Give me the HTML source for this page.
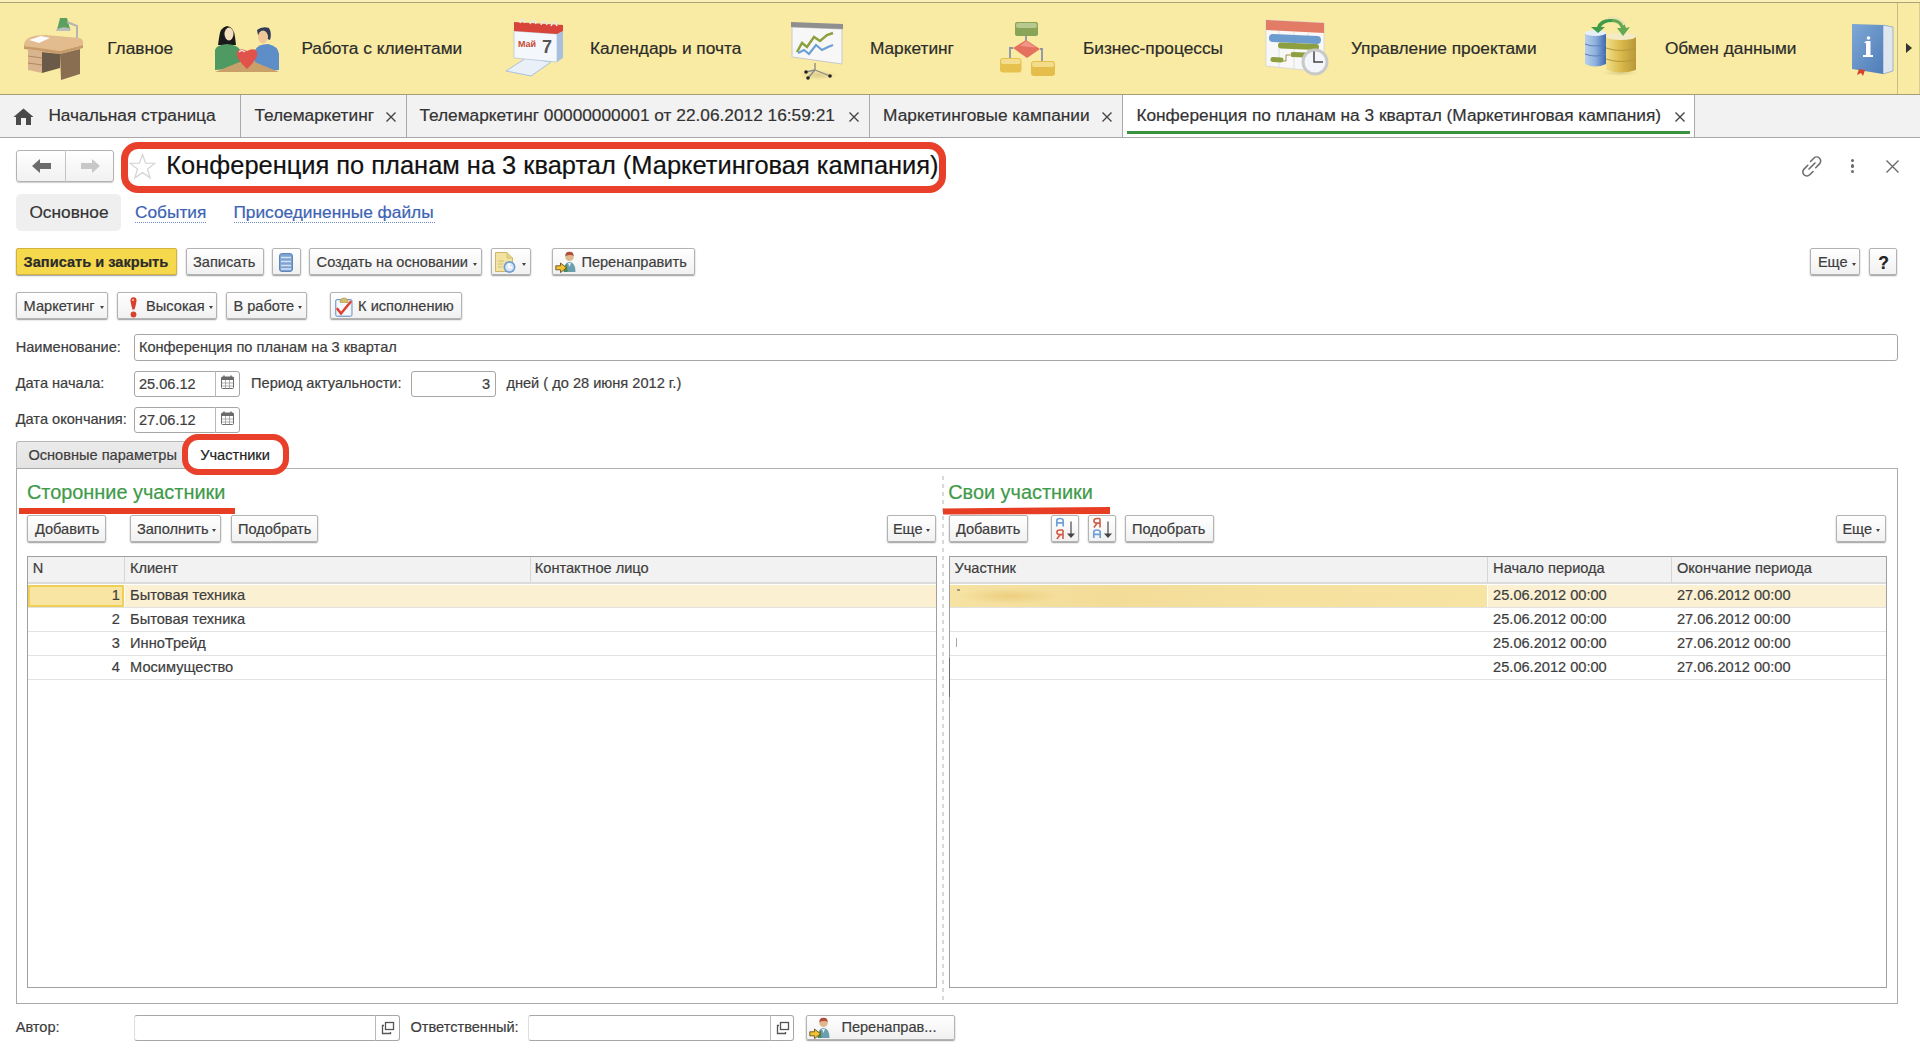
<!DOCTYPE html>
<html><head><meta charset="utf-8"><style>
html,body{margin:0;padding:0;width:1920px;height:1056px;overflow:hidden;background:#fff;}
body{position:relative;font-family:"Liberation Sans",sans-serif;}
.t{position:absolute;white-space:nowrap;line-height:1;-webkit-text-stroke:0.2px currentColor;}
.r{position:absolute;box-sizing:border-box;}
.btn{position:absolute;box-sizing:border-box;border:1px solid #b3b3b3;border-radius:2px;background:linear-gradient(#ffffff,#f1f1f1);box-shadow:0 1px 1.5px rgba(0,0,0,0.4);}
.inp{position:absolute;box-sizing:border-box;border:1px solid #a6a6a6;border-radius:3px;background:#fff;}
.btn.yel{background:#f5d84c;border-color:#d2b33c;}
.btn.nav{border-radius:3px;box-shadow:0 1px 1px rgba(0,0,0,0.2);}
</style></head><body>
<div class="r" style="left:0px;top:0px;width:1920px;height:95px;background:#F9EBA3;"></div>
<div class="r" style="left:0px;top:0px;width:1920px;height:2px;background:#fbf0b5;"></div>
<div class="r" style="left:0px;top:2px;width:1920px;height:1px;background:#aba275;"></div>
<div class="r" style="left:0px;top:94px;width:1920px;height:1px;background:#a69e73;"></div>
<div class="r" style="left:1897px;top:3px;width:1px;height:91px;background:#c9bd85;"></div>
<div class="r" style="left:1919px;top:3px;width:1px;height:91px;background:#d9cd95;"></div>
<div class="r" style="left:1906px;top:43px;width:0;height:0;border-top:5.5px solid transparent;border-bottom:5.5px solid transparent;border-left:6px solid #333"></div>
<div class="t" style="left:107.2px;top:40.36px;font-size:17.3px;color:#2b2b2b;font-weight:400;transform-origin:0 14.64px;">Главное</div>
<div class="t" style="left:301.4px;top:40.36px;font-size:17.3px;color:#2b2b2b;font-weight:400;transform-origin:0 14.64px;">Работа с клиентами</div>
<div class="t" style="left:589.9px;top:40.36px;font-size:17.3px;color:#2b2b2b;font-weight:400;transform-origin:0 14.64px;">Календарь и почта</div>
<div class="t" style="left:869.9px;top:40.36px;font-size:17.3px;color:#2b2b2b;font-weight:400;transform-origin:0 14.64px;">Маркетинг</div>
<div class="t" style="left:1082.9px;top:40.36px;font-size:17.3px;color:#2b2b2b;font-weight:400;transform-origin:0 14.64px;">Бизнес-процессы</div>
<div class="t" style="left:1350.9px;top:40.36px;font-size:17.3px;color:#2b2b2b;font-weight:400;transform-origin:0 14.64px;">Управление проектами</div>
<div class="t" style="left:1664.9px;top:40.36px;font-size:17.3px;color:#2b2b2b;font-weight:400;transform-origin:0 14.64px;">Обмен данными</div>
<svg class="r" style="left:0;top:0" width="1920" height="95" viewBox="0 0 1920 95">
<defs>
<linearGradient id="gDesk" x1="0" y1="0" x2="0" y2="1"><stop offset="0" stop-color="#e8c9a0"/><stop offset="1" stop-color="#cfa77a"/></linearGradient>
<linearGradient id="gBlueCyl" x1="0" y1="0" x2="1" y2="0"><stop offset="0" stop-color="#b9d0ec"/><stop offset="0.5" stop-color="#8cb0dc"/><stop offset="1" stop-color="#3f67b0"/></linearGradient>
<linearGradient id="gYelCyl" x1="0" y1="0" x2="1" y2="0"><stop offset="0" stop-color="#f1e08a"/><stop offset="0.5" stop-color="#d9b94a"/><stop offset="1" stop-color="#b8973a"/></linearGradient>
<linearGradient id="gBook" x1="0" y1="0" x2="1" y2="1"><stop offset="0" stop-color="#7fa8d6"/><stop offset="1" stop-color="#4f7db8"/></linearGradient>
<radialGradient id="gShadow"><stop offset="0" stop-color="#c8b880" stop-opacity="0.6"/><stop offset="1" stop-color="#c8b880" stop-opacity="0"/></radialGradient>
</defs>
<!-- desk -->
<g>
<path d="M60 18 L67 18 L70 29 L57 30 Z" fill="#5aa05f"/>
<path d="M56 30 Q63 25 71 29 L70 31 L56 31Z" fill="#bdbdbd"/>
<path d="M67 22 L77 26 L77 38" stroke="#b4b4b4" stroke-width="2" fill="none"/>
<path d="M24 44 Q26 35 45 35 L80 38 Q84 40 83 45 L60 51 Q40 50 24 46Z" fill="#e2bb8e"/>
<path d="M24 46 L60 51 L83 45 L83 48 L60 54 L24 49Z" fill="#c89a6a"/>
<path d="M29 40 L41 36 L50 38 L39 43Z" fill="#fbfbfb"/>
<path d="M28 49 L42 51 L42 73 L28 70Z" fill="#d9b48e"/>
<path d="M28 56 L42 58 M28 63 L42 65" stroke="#b08862" stroke-width="1"/>
<path d="M42 52 L60 54 L60 68 L42 73Z" fill="#6b5a48"/>
<path d="M60 54 L80 49 L80 74 L61 80Z" fill="#8a6e52"/>
</g>
<!-- people -->
<g>
<path d="M219 38 Q220 27 227 26 Q234 27 235 37 L236 45 L218 45Z" fill="#1a1a1a"/>
<ellipse cx="229" cy="34" rx="4.5" ry="6.5" fill="#f3dfc0"/>
<path d="M215 70 L215 50 Q216 45 227 44 Q238 45 240 50 L243 68Z" fill="#4f9a62"/>
<path d="M257 30 Q262 26 269 28 Q272 33 270 40 L258 35Z" fill="#333c55"/>
<ellipse cx="263" cy="37" rx="5" ry="6.5" fill="#f0c898"/>
<path d="M254 72 L255 50 Q258 44 268 44 Q278 46 279 54 L279 70Z" fill="#5d8ec8"/>
<path d="M215 72 L247 59 L279 72Z" fill="#c9a06a"/>
<path d="M247 69 Q235 58 237 52 Q240 47 247 51 Q254 47 257 52 Q259 58 247 69Z" fill="#e0524a"/>
<path d="M239 52 Q242 49 245 52" stroke="#fff" stroke-width="1.5" fill="none" opacity="0.8"/>
</g>
<!-- calendar -->
<g>
<path d="M506 71 L526 58 L551 62 L531 76Z" fill="#e9f0f8" stroke="#a9c0dc" stroke-width="1"/>
<path d="M514 31 L557 34 L557 62 L514 58Z" fill="#f4f8fc" stroke="#b9c8da" stroke-width="0.8"/>
<path d="M557 34 L563 31 L563 58 L557 62Z" fill="#a8c0de"/>
<path d="M514 22 L563 25 L563 31 L557 34 L514 31Z" fill="#d8433a"/>
<path d="M520 23 Q522 16 525 23 M530 24 Q533 17 536 24 M541 25 Q544 18 547 25 M551 26 Q554 19 557 26" stroke="#e8e8e8" stroke-width="1.5" fill="none"/>
<text x="518" y="47" font-family="Liberation Sans" font-size="9" font-weight="700" fill="#c94a35">Май</text>
<text x="542" y="53" font-family="Liberation Sans" font-size="18" font-weight="700" fill="#555">7</text>
</g>
<!-- board -->
<g>
<ellipse cx="818" cy="75" rx="20" ry="5" fill="url(#gShadow)"/>
<path d="M792 27 L842 29 L842 64 L792 57Z" fill="#f7f7f7" stroke="#c9c9c9" stroke-width="1"/>
<path d="M791 22 L843 24 L843 29 L791 27Z" fill="#8f8f8f"/>
<path d="M797 52 L802 43 L807 47 L814 37 L820 41 L827 35 L833 33" stroke="#8da040" stroke-width="2.5" fill="none"/>
<path d="M798 53 L804 50 L809 54 L816 45 L822 50 L828 47 L833 45" stroke="#6b9fd4" stroke-width="2.2" fill="none"/>
<path d="M815 63 L815 70 L806 72 M815 70 L808 78 M815 70 L830 76" stroke="#888" stroke-width="1.3" fill="none"/>
<circle cx="806" cy="72" r="1.8" fill="#222"/><circle cx="808" cy="78" r="1.8" fill="#222"/><circle cx="830" cy="76" r="1.8" fill="#222"/>
</g>
<!-- flowchart -->
<g>
<path d="M1026 36 V41 M1013 48 H1010 V58 M1040 49 H1042 V61" stroke="#8a94a8" stroke-width="1.8" fill="none"/>
<rect x="1015" y="22" width="23" height="14" rx="2" fill="#88a456"/>
<rect x="1016" y="23" width="21" height="5" rx="2" fill="#b7c98e"/>
<path d="M1026 40 L1040 49 L1027 58 L1013 48Z" fill="#e6705e"/><path d="M1026 41 L1036 47.5 L1020 46Z" fill="#f1a898" opacity="0.7"/>
<rect x="1000" y="58" width="21.5" height="14.5" rx="3" fill="#e7c14e"/><rect x="1001" y="59" width="19.5" height="5" rx="2" fill="#f4de8e"/>
<rect x="1031" y="61" width="24" height="15" rx="3" fill="#e5bd4a"/><rect x="1032" y="62" width="22" height="5" rx="2" fill="#f3dc8c"/>
</g>
<!-- gantt -->
<g>
<path d="M1266 20 L1324 23 L1324 72 L1266 66Z" fill="#f8f8f8" stroke="#d4d4d4" stroke-width="0.8"/>
<path d="M1266 20 L1324 23 L1324 33 L1266 30Z" fill="#e27c66"/>
<path d="M1279 31 V67 M1294 32 V69 M1308 33 V70" stroke="#e0e0e0" stroke-width="1"/>
<path d="M1273 38 L1317 40" stroke="#6d9ccf" stroke-width="8" stroke-linecap="round"/>
<path d="M1281 45.5 L1316 47" stroke="#8da040" stroke-width="6" stroke-linecap="round"/>
<path d="M1293 54.5 L1305 55" stroke="#8da040" stroke-width="5" stroke-linecap="round"/>
<path d="M1273 59.5 L1281 60" stroke="#8da040" stroke-width="5" stroke-linecap="round"/>
<path d="M1283 61 H1286 V55 H1290" stroke="#a09048" stroke-width="1" fill="none"/>
<circle cx="1315" cy="62" r="13.5" fill="#c9c9c9"/>
<circle cx="1315" cy="62" r="10.5" fill="#f3f6fa"/>
<path d="M1314 51.5 V62 H1323" stroke="#444" stroke-width="1.5" fill="none"/>
</g>
<!-- databases -->
<g>
<ellipse cx="1620" cy="73" rx="18" ry="3" fill="url(#gShadow)"/>
<path d="M1585 34 Q1595 29 1606 34 V64 Q1595 69 1585 64Z" fill="url(#gBlueCyl)"/>
<ellipse cx="1595.5" cy="33" rx="10.5" ry="3" fill="#e6eef8"/>
<path d="M1585 44 Q1595 48 1606 44 M1585 54 Q1595 58 1606 54" stroke="#5d80b8" stroke-width="1" fill="none"/>
<path d="M1606 37 Q1621 32 1636 37 V70 Q1621 75 1606 70Z" fill="url(#gYelCyl)"/>
<ellipse cx="1621" cy="36.5" rx="15" ry="3.5" fill="#f2ebc6"/>
<path d="M1606 48 Q1621 53 1636 48 M1606 59 Q1621 64 1636 59" stroke="#b59838" stroke-width="1" fill="none"/>
<path d="M1612 19 Q1600 18 1597 27 L1591 27 L1598 33 L1605 27 L1601 27 Q1604 22 1612 22Z" fill="#3f9a4a"/>
<path d="M1612 19 Q1624 18 1626 28 L1630 27 L1623 36 L1617 28 L1621 28 Q1619 22 1612 22Z" fill="#64a854"/>
<path d="M1608 18 Q1620 16 1624 25" stroke="#e8e0b0" stroke-width="2" fill="none"/>
</g>
<!-- book -->
<g>
<path d="M1883 25 L1893 27 L1893 71 L1883 74Z" fill="#dfe6ee" stroke="#8aa6c8" stroke-width="0.8"/>
<path d="M1852 24 L1883 25 L1883 74 L1852 69Z" fill="url(#gBook)"/>
<path d="M1866 41 H1870.5 V55 H1873 V57 H1863 V55 H1866 V43 H1864Z" fill="#fff"/>
<circle cx="1868.5" cy="38" r="1.8" fill="#fff"/>
<path d="M1859 69 L1865 70 L1863 76 L1861 73 L1857 75Z" fill="#d8402f"/>
</g>
</svg>
<div class="r" style="left:0px;top:95px;width:1920px;height:42px;background:#f2f2f2;"></div>
<div class="r" style="left:0px;top:137px;width:1920px;height:1px;background:#a8a8a8;"></div>
<div class="r" style="left:1123px;top:95px;width:571px;height:42px;background:#fff;"></div>
<div class="r" style="left:240px;top:95px;width:1px;height:42px;background:#a9a9a9;"></div>
<div class="r" style="left:406px;top:95px;width:1px;height:42px;background:#a9a9a9;"></div>
<div class="r" style="left:869px;top:95px;width:1px;height:42px;background:#a9a9a9;"></div>
<div class="r" style="left:1122px;top:95px;width:1px;height:42px;background:#a9a9a9;"></div>
<div class="r" style="left:1694px;top:95px;width:1px;height:42px;background:#a9a9a9;"></div>
<div class="r" style="left:1127px;top:131px;width:563px;height:3px;background:#3a943f;"></div>
<div class="t" style="left:48.4px;top:107.36px;font-size:17.3px;color:#333;font-weight:400;transform-origin:0 14.64px;">Начальная страница</div>
<div class="t" style="left:254.4px;top:107.36px;font-size:17.3px;color:#333;font-weight:400;transform-origin:0 14.64px;">Телемаркетинг</div>
<svg class="r" style="left:385.6px;top:112px" width="10" height="10" viewBox="0 0 10 10"><path d="M0.5 0.5L9.5 9.5M9.5 0.5L0.5 9.5" stroke="#444" stroke-width="1.4"/></svg>
<div class="t" style="left:419.4px;top:107.36px;font-size:17.3px;color:#333;font-weight:400;transform-origin:0 14.64px;">Телемаркетинг 00000000001 от 22.06.2012 16:59:21</div>
<svg class="r" style="left:849px;top:112px" width="10" height="10" viewBox="0 0 10 10"><path d="M0.5 0.5L9.5 9.5M9.5 0.5L0.5 9.5" stroke="#444" stroke-width="1.4"/></svg>
<div class="t" style="left:883.1px;top:107.36px;font-size:17.3px;color:#333;font-weight:400;transform-origin:0 14.64px;">Маркетинговые кампании</div>
<svg class="r" style="left:1102px;top:112px" width="10" height="10" viewBox="0 0 10 10"><path d="M0.5 0.5L9.5 9.5M9.5 0.5L0.5 9.5" stroke="#444" stroke-width="1.4"/></svg>
<div class="t" style="left:1136.4px;top:107.36px;font-size:17.3px;color:#333;font-weight:400;transform-origin:0 14.64px;">Конференция по планам на 3 квартал (Маркетинговая кампания)</div>
<svg class="r" style="left:1674.5px;top:112px" width="10" height="10" viewBox="0 0 10 10"><path d="M0.5 0.5L9.5 9.5M9.5 0.5L0.5 9.5" stroke="#444" stroke-width="1.4"/></svg>
<svg class="r" style="left:13px;top:108px" width="21" height="18" viewBox="0 0 21 18"><path d="M10.5 0.5L20.5 9H18V17H13V10H8V17H3V9H0.5Z" fill="#4a4a4a"/></svg>
<div class="btn nav" style="left:16px;top:150px;width:98px;height:32px;"></div>
<div class="r" style="left:65px;top:150px;width:1px;height:32px;background:#c4c4c4;"></div>
<svg class="r" style="left:32px;top:159px" width="20" height="14" viewBox="0 0 20 14"><path d="M0 7L8 0V4H19V10H8V14Z" fill="#6b6b6b"/></svg>
<svg class="r" style="left:80px;top:159px" width="20" height="14" viewBox="0 0 20 14"><path d="M20 7L12 0V4H1V10H12V14Z" fill="#c8c8c8"/></svg>
<div class="r" style="left:121px;top:142px;width:825px;height:51px;border:7px solid #e8402a;border-radius:17px;"></div>
<svg class="r" style="left:129px;top:153px" width="27" height="27" viewBox="0 0 27 27"><path d="M13.5 1.5L16.6 10.2L25.8 10.4L18.5 16L21.1 24.9L13.5 19.6L5.9 24.9L8.5 16L1.2 10.4L10.4 10.2Z" fill="none" stroke="#d6d6d6" stroke-width="1.3"/></svg>
<div class="t" style="left:166.3px;top:153.46px;font-size:25.45px;color:#111;font-weight:400;transform-origin:0 21.54px;">Конференция по планам на 3 квартал (Маркетинговая кампания)</div>
<svg class="r" style="left:1800px;top:155px" width="24" height="23" viewBox="0 0 24 23"><g fill="none" stroke="#6e6e6e" stroke-width="1.6" stroke-linecap="round"><path d="M10.5 6.5L13.8 3.2a4 4 0 0 1 5.7 5.7L15.7 12.7"/><path d="M13 16.5L9.7 19.8a4 4 0 0 1-5.7-5.7L7.8 10.3"/><path d="M9 14L15 8"/></g></svg>
<div class="r" style="left:1850.8px;top:158.9px;width:3.6px;height:3.6px;border-radius:50%;background:#6a6a6a"></div>
<div class="r" style="left:1850.8px;top:164.3px;width:3.6px;height:3.6px;border-radius:50%;background:#6a6a6a"></div>
<div class="r" style="left:1850.8px;top:169.6px;width:3.6px;height:3.6px;border-radius:50%;background:#6a6a6a"></div>
<svg class="r" style="left:1886px;top:160px" width="13" height="13" viewBox="0 0 13 13"><path d="M0.5 0.5L12.5 12.5M12.5 0.5L0.5 12.5" stroke="#6a6a6a" stroke-width="1.4"/></svg>
<div class="r" style="left:16px;top:194px;width:105px;height:37px;background:#efefef;border-radius:5px;"></div>
<div class="t" style="left:29.4px;top:204.16px;font-size:17.3px;color:#333;font-weight:400;transform-origin:0 14.64px;">Основное</div>
<div class="t" style="left:135.0px;top:204.16px;font-size:17.3px;color:#3c63b4;font-weight:400;transform-origin:0 14.64px;">События</div>
<div class="r" style="left:135px;top:222px;width:72px;height:2px;background-image:linear-gradient(90deg,#6d8fd0 50%,transparent 50%);background-size:2px 1px;background-repeat:repeat-x;height:1px;"></div>
<div class="t" style="left:233.4px;top:204.16px;font-size:17.3px;color:#3c63b4;font-weight:400;transform-origin:0 14.64px;">Присоединенные файлы</div>
<div class="r" style="left:234px;top:222px;width:201px;height:2px;background-image:linear-gradient(90deg,#6d8fd0 50%,transparent 50%);background-size:2px 1px;background-repeat:repeat-x;height:1px;"></div>
<div class="btn yel" style="left:16px;top:248px;width:161px;height:27px;"></div>
<div class="t" style="left:23.6px;top:254.64px;font-size:14.6px;color:#2b2b2b;font-weight:700;transform-origin:0 12.36px;">Записать и закрыть</div>
<div class="btn" style="left:186px;top:248px;width:78px;height:27px;"></div>
<div class="t" style="left:193.0px;top:254.64px;font-size:14.6px;color:#3d3d3d;font-weight:400;transform-origin:0 12.36px;">Записать</div>
<div class="btn" style="left:272px;top:248px;width:29px;height:27px;"></div>
<svg class="r" style="left:279px;top:252.5px" width="14" height="19" viewBox="0 0 14 19"><rect x="0.5" y="0.5" width="13" height="18" rx="2.5" fill="#7ea3d3" stroke="#5f86bb" stroke-width="1"/><path d="M2 4.5H12M2 8.5H12M2 12.5H12M2 16H12" stroke="#d6e3f3" stroke-width="1.6"/></svg>
<div class="btn" style="left:309px;top:248px;width:173px;height:27px;"></div>
<div class="t" style="left:316.6px;top:254.64px;font-size:14.6px;color:#3d3d3d;font-weight:400;transform-origin:0 12.36px;">Создать на основании</div>
<div class="r" style="left:473.4px;top:262.5px;width:0;height:0;border-left:2.5px solid transparent;border-right:2.5px solid transparent;border-top:3px solid #444"></div>
<div class="btn" style="left:491px;top:248px;width:40px;height:27px;"></div>
<svg class="r" style="left:494px;top:252px" width="24" height="22" viewBox="0 0 24 22"><path d="M1.5 0.5H13L18.5 6V19.5H1.5Z" fill="#f2e3a0" stroke="#cdb66a" stroke-width="1"/><path d="M13 0.5V6H18.5" fill="#e8d488" stroke="#cdb66a" stroke-width="0.8"/><path d="M4 9H10M4 12H9M4 15H8" stroke="#c9b878" stroke-width="0.8"/><circle cx="15.5" cy="15" r="6" fill="#6f9fd6"/><circle cx="15.5" cy="15" r="4.3" fill="#d9e7f6"/><path d="M15 11.5V15.5H18" stroke="#fff" stroke-width="1.6" fill="none"/></svg>
<div class="r" style="left:522.2px;top:262.5px;width:0;height:0;border-left:2.5px solid transparent;border-right:2.5px solid transparent;border-top:3px solid #444"></div>
<div class="btn" style="left:552px;top:248px;width:143px;height:27px;"></div>
<svg class="r" style="left:555px;top:251px" width="22" height="23" viewBox="0 0 22 23"><circle cx="14.5" cy="5.8" r="4.3" fill="#e0b890"/><path d="M10.3 5Q10.5 0.5 14.5 0.8Q18.5 0.5 18.7 5Q16 2.8 10.3 5Z" fill="#b0503a"/><path d="M8.5 21Q8.5 11.5 14.5 11Q20.5 11.5 20.5 21Z" fill="#6a9fb0"/><path d="M9 21Q9 15 12 13L12.5 21Z" fill="#4f8a55"/><path d="M13 12L14.5 16L16 12Z" fill="#e6eef4"/><path d="M0.8 14.8H5.5V12L11.5 16.8L5.5 21.6V18.8H0.8Z" fill="#f2c230" stroke="#6a5020" stroke-width="0.9"/></svg>
<div class="t" style="left:581.4px;top:254.64px;font-size:14.6px;color:#3d3d3d;font-weight:400;transform-origin:0 12.36px;">Перенаправить</div>
<div class="btn" style="left:1810px;top:248px;width:50px;height:27px;"></div>
<div class="t" style="left:1817.9px;top:254.64px;font-size:14.6px;color:#3d3d3d;font-weight:400;transform-origin:0 12.36px;">Еще</div>
<div class="r" style="left:1851.5px;top:262.5px;width:0;height:0;border-left:2.5px solid transparent;border-right:2.5px solid transparent;border-top:3px solid #444"></div>
<div class="btn" style="left:1869px;top:248px;width:28px;height:27px;"></div>
<div class="t" style="left:1878.3px;top:255.19px;font-size:17.5px;color:#222;font-weight:700;transform-origin:0 14.81px;">?</div>
<div class="btn" style="left:16px;top:292px;width:92px;height:27px;"></div>
<div class="t" style="left:23.6px;top:298.64px;font-size:14.6px;color:#3d3d3d;font-weight:400;transform-origin:0 12.36px;">Маркетинг</div>
<div class="r" style="left:99.8px;top:306px;width:0;height:0;border-left:2.5px solid transparent;border-right:2.5px solid transparent;border-top:3px solid #444"></div>
<div class="btn" style="left:117px;top:292px;width:100px;height:27px;"></div>
<svg class="r" style="left:129.5px;top:296.5px" width="7" height="21" viewBox="0 0 7 21"><path d="M0.5 3.2Q0.5 0.2 3.5 0.2Q6.5 0.2 6.5 3.2Q6.5 6 4.5 12.5H2.5Q0.5 6 0.5 3.2Z" fill="#d8412e"/><circle cx="3.5" cy="17.5" r="2.9" fill="#d8412e"/><circle cx="3" cy="3" r="1" fill="#f0c8a0"/></svg>
<div class="t" style="left:146.1px;top:298.64px;font-size:14.6px;color:#3d3d3d;font-weight:400;transform-origin:0 12.36px;">Высокая</div>
<div class="r" style="left:208.8px;top:306px;width:0;height:0;border-left:2.5px solid transparent;border-right:2.5px solid transparent;border-top:3px solid #444"></div>
<div class="btn" style="left:226px;top:292px;width:81px;height:27px;"></div>
<div class="t" style="left:233.4px;top:298.64px;font-size:14.6px;color:#3d3d3d;font-weight:400;transform-origin:0 12.36px;">В работе</div>
<div class="r" style="left:297.8px;top:306px;width:0;height:0;border-left:2.5px solid transparent;border-right:2.5px solid transparent;border-top:3px solid #444"></div>
<div class="btn" style="left:330px;top:292px;width:132px;height:27px;"></div>
<svg class="r" style="left:334.5px;top:296.5px" width="18" height="20" viewBox="0 0 18 20"><rect x="0.7" y="2.5" width="16.3" height="16.8" rx="1.5" fill="#dfe9f5" stroke="#6f93c2" stroke-width="1"/><rect x="2" y="4" width="13.5" height="14" fill="#f6f9fc"/><path d="M5 5.5Q5 1 9 1Q13 1 13 5.5Z" fill="#d2bf6a" stroke="#a89040" stroke-width="0.6"/><path d="M2.5 12L6 16.5L15.5 5" stroke="#e04232" stroke-width="2.6" fill="none" stroke-linecap="round"/></svg>
<div class="t" style="left:358.1px;top:298.64px;font-size:14.6px;color:#3d3d3d;font-weight:400;transform-origin:0 12.36px;">К исполнению</div>
<div class="t" style="left:15.7px;top:339.64px;font-size:14.6px;color:#3d3d3d;font-weight:400;transform-origin:0 12.36px;">Наименование:</div>
<div class="inp" style="left:134px;top:334px;width:1764px;height:27px;"></div>
<div class="t" style="left:138.9px;top:340.14px;font-size:14.6px;color:#3d3d3d;font-weight:400;transform-origin:0 12.36px;">Конференция по планам на 3 квартал</div>
<div class="t" style="left:15.7px;top:376.14px;font-size:14.6px;color:#3d3d3d;font-weight:400;transform-origin:0 12.36px;">Дата начала:</div>
<div class="inp" style="left:134px;top:371px;width:106px;height:26px;"></div>
<div class="r" style="left:215px;top:371px;width:1px;height:26px;background:#b8b8b8;"></div>
<svg class="r" style="left:221px;top:375px" width="13" height="14" viewBox="0 0 13 14"><rect x="0.5" y="2" width="12" height="11.5" rx="1" fill="#fff" stroke="#6b6b6b"/><rect x="0.5" y="2" width="12" height="3" fill="#6b6b6b"/><path d="M3 0.5V3M10 0.5V3" stroke="#6b6b6b" stroke-width="1.5"/><path d="M1 8H12M1 11H12M4.5 5V13.5M8.5 5V13.5" stroke="#9a9a9a" stroke-width="0.8"/></svg>
<div class="t" style="left:138.9px;top:376.64px;font-size:14.6px;color:#3d3d3d;font-weight:400;transform-origin:0 12.36px;">25.06.12</div>
<div class="t" style="left:251.1px;top:376.14px;font-size:14.6px;color:#3d3d3d;font-weight:400;transform-origin:0 12.36px;">Период актуальности:</div>
<div class="inp" style="left:411px;top:371px;width:85px;height:26px;"></div>
<div class="t" style="left:482.1px;top:376.64px;font-size:14.6px;color:#3d3d3d;font-weight:400;transform-origin:0 12.36px;">3</div>
<div class="t" style="left:506.4px;top:376.14px;font-size:14.6px;color:#3d3d3d;font-weight:400;transform-origin:0 12.36px;">дней ( до 28 июня 2012 г.)</div>
<div class="t" style="left:15.7px;top:412.14px;font-size:14.6px;color:#3d3d3d;font-weight:400;transform-origin:0 12.36px;">Дата окончания:</div>
<div class="inp" style="left:134px;top:407px;width:106px;height:26px;"></div>
<div class="r" style="left:215px;top:407px;width:1px;height:26px;background:#b8b8b8;"></div>
<svg class="r" style="left:221px;top:411px" width="13" height="14" viewBox="0 0 13 14"><rect x="0.5" y="2" width="12" height="11.5" rx="1" fill="#fff" stroke="#6b6b6b"/><rect x="0.5" y="2" width="12" height="3" fill="#6b6b6b"/><path d="M3 0.5V3M10 0.5V3" stroke="#6b6b6b" stroke-width="1.5"/><path d="M1 8H12M1 11H12M4.5 5V13.5M8.5 5V13.5" stroke="#9a9a9a" stroke-width="0.8"/></svg>
<div class="t" style="left:138.9px;top:412.64px;font-size:14.6px;color:#3d3d3d;font-weight:400;transform-origin:0 12.36px;">27.06.12</div>
<div class="r" style="left:16px;top:441px;width:170px;height:28px;background:linear-gradient(#ebebeb,#e3e3e3);border:1px solid #b8b8b8;border-bottom:none;border-radius:3px 0 0 0;"></div>
<div class="r" style="left:16px;top:468px;width:1882px;height:536px;border:1px solid #a9a9a9;border-top:1px solid #b3b3b3;"></div>
<div class="r" style="left:186px;top:443px;width:98px;height:26px;background:#fff;"></div>
<div class="r" style="left:17px;top:468px;width:169px;height:1px;background:#a9a9a9;"></div>
<div class="t" style="left:28.4px;top:448.14px;font-size:14.6px;color:#3d3d3d;font-weight:400;transform-origin:0 12.36px;">Основные параметры</div>
<div class="t" style="left:200.2px;top:448.14px;font-size:14.6px;color:#222;font-weight:400;transform-origin:0 12.36px;">Участники</div>
<div class="r" style="left:182px;top:434px;width:107px;height:41px;border:6px solid #e8402a;border-radius:16px;"></div>
<div class="t" style="left:26.9px;top:482.95px;font-size:19.9px;color:#3f9a49;font-weight:400;transform-origin:0 16.85px;">Сторонние участники</div>
<div class="r" style="left:19px;top:508px;width:216px;height:6px;background:#e63d23;"></div>
<div class="btn" style="left:27px;top:515px;width:79px;height:27px;"></div>
<div class="t" style="left:34.9px;top:521.64px;font-size:14.6px;color:#3d3d3d;font-weight:400;transform-origin:0 12.36px;">Добавить</div>
<div class="btn" style="left:130px;top:515px;width:91px;height:27px;"></div>
<div class="t" style="left:136.9px;top:521.64px;font-size:14.6px;color:#3d3d3d;font-weight:400;transform-origin:0 12.36px;">Заполнить</div>
<div class="r" style="left:211.5px;top:528.5px;width:0;height:0;border-left:2.5px solid transparent;border-right:2.5px solid transparent;border-top:3px solid #444"></div>
<div class="btn" style="left:231px;top:515px;width:87px;height:27px;"></div>
<div class="t" style="left:237.9px;top:521.64px;font-size:14.6px;color:#3d3d3d;font-weight:400;transform-origin:0 12.36px;">Подобрать</div>
<div class="btn" style="left:887px;top:515px;width:49px;height:27px;"></div>
<div class="t" style="left:892.9px;top:521.64px;font-size:14.6px;color:#3d3d3d;font-weight:400;transform-origin:0 12.36px;">Еще</div>
<div class="r" style="left:926px;top:528.5px;width:0;height:0;border-left:2.5px solid transparent;border-right:2.5px solid transparent;border-top:3px solid #444"></div>
<div class="r" style="left:942px;top:476px;width:2px;height:524px;background-image:linear-gradient(#d8d8d8 50%,transparent 50%);background-size:2px 8px;"></div>
<div class="t" style="left:948.2px;top:482.95px;font-size:19.9px;color:#3f9a49;font-weight:400;transform-origin:0 16.85px;">Свои участники</div>
<svg class="r" style="left:943px;top:506px" width="168" height="9"><path d="M0 2.5L167 1V8L0 8.5Z" fill="#e63d23"/></svg>
<div class="btn" style="left:949px;top:515px;width:79px;height:27px;"></div>
<div class="t" style="left:955.9px;top:521.64px;font-size:14.6px;color:#3d3d3d;font-weight:400;transform-origin:0 12.36px;">Добавить</div>
<div class="btn" style="left:1051px;top:515px;width:28px;height:27px;"></div>
<svg class="r" style="left:1051px;top:515px" width="28" height="27" viewBox="0 0 28 27"><g transform="translate(4.8,2.5)"><path d="M1 9V3.2Q1 1 4.2 1Q7.4 1 7.4 3.2V9M1 5.3H7.4" stroke="#6f9fd6" stroke-width="1.7" fill="none"/></g><g transform="translate(4.8,14)"><path d="M7.2 1V10M7.2 1H3.9Q1.1 1 1.1 3.3Q1.1 5.6 3.9 5.6H7.2M4.5 5.6L1.1 10" stroke="#d05a45" stroke-width="1.6" fill="none"/></g><path d="M20 6.5V20" stroke="#555" stroke-width="1.3"/><path d="M16 18.5H24L20 23Z" fill="#444"/></svg>
<div class="btn" style="left:1088px;top:515px;width:28px;height:27px;"></div>
<svg class="r" style="left:1088px;top:515px" width="28" height="27" viewBox="0 0 28 27"><g transform="translate(4.8,2.5)"><path d="M7.2 1V10M7.2 1H3.9Q1.1 1 1.1 3.3Q1.1 5.6 3.9 5.6H7.2M4.5 5.6L1.1 10" stroke="#d05a45" stroke-width="1.6" fill="none"/></g><g transform="translate(4.8,14)"><path d="M1 9V3.2Q1 1 4.2 1Q7.4 1 7.4 3.2V9M1 5.3H7.4" stroke="#6f9fd6" stroke-width="1.7" fill="none"/></g><path d="M20 6.5V20" stroke="#555" stroke-width="1.3"/><path d="M16 18.5H24L20 23Z" fill="#444"/></svg>
<div class="btn" style="left:1125px;top:515px;width:89px;height:27px;"></div>
<div class="t" style="left:1131.9px;top:521.64px;font-size:14.6px;color:#3d3d3d;font-weight:400;transform-origin:0 12.36px;">Подобрать</div>
<div class="btn" style="left:1836px;top:515px;width:50px;height:27px;"></div>
<div class="t" style="left:1842.4px;top:521.64px;font-size:14.6px;color:#3d3d3d;font-weight:400;transform-origin:0 12.36px;">Еще</div>
<div class="r" style="left:1875.5px;top:528.5px;width:0;height:0;border-left:2.5px solid transparent;border-right:2.5px solid transparent;border-top:3px solid #444"></div>
<div class="r" style="left:27px;top:556px;width:910px;height:432px;border:1px solid #a0a0a0;background:#fff;"></div>
<div class="r" style="left:28px;top:557px;width:908px;height:25px;background:#f2f2f2;"></div>
<div class="r" style="left:28px;top:582px;width:908px;height:2px;background:#dadcdc;"></div>
<div class="r" style="left:124px;top:557px;width:1px;height:25px;background:#d6d6d6;"></div>
<div class="r" style="left:530px;top:557px;width:1px;height:25px;background:#d6d6d6;"></div>
<div class="r" style="left:28px;top:607px;width:908px;height:1px;background:#e2e2e2;"></div>
<div class="r" style="left:28px;top:631px;width:908px;height:1px;background:#e2e2e2;"></div>
<div class="r" style="left:28px;top:655px;width:908px;height:1px;background:#e2e2e2;"></div>
<div class="r" style="left:28px;top:679px;width:908px;height:1px;background:#e2e2e2;"></div>
<div class="r" style="left:125px;top:585px;width:811px;height:22px;background:#fbf1d2;"></div>
<div class="r" style="left:28px;top:585px;width:96px;height:22px;background:#f8e5a4;border:2px solid #efcf55;"></div>
<div class="t" style="left:32.7px;top:561.24px;font-size:14.6px;color:#3d3d3d;font-weight:400;transform-origin:0 12.36px;">N</div>
<div class="t" style="left:129.9px;top:561.24px;font-size:14.6px;color:#3d3d3d;font-weight:400;transform-origin:0 12.36px;">Клиент</div>
<div class="t" style="left:534.8px;top:561.24px;font-size:14.6px;color:#3d3d3d;font-weight:400;transform-origin:0 12.36px;">Контактное лицо</div>
<div class="t" style="left:110.9px;top:587.94px;font-size:14.6px;color:#3d3d3d;font-weight:400;transform-origin:0 12.36px;width:9px;text-align:right;">1</div>
<div class="t" style="left:130.1px;top:587.94px;font-size:14.6px;color:#3d3d3d;font-weight:400;transform-origin:0 12.36px;">Бытовая техника</div>
<div class="t" style="left:110.9px;top:611.94px;font-size:14.6px;color:#3d3d3d;font-weight:400;transform-origin:0 12.36px;width:9px;text-align:right;">2</div>
<div class="t" style="left:130.1px;top:611.94px;font-size:14.6px;color:#3d3d3d;font-weight:400;transform-origin:0 12.36px;">Бытовая техника</div>
<div class="t" style="left:110.9px;top:635.94px;font-size:14.6px;color:#3d3d3d;font-weight:400;transform-origin:0 12.36px;width:9px;text-align:right;">3</div>
<div class="t" style="left:130.1px;top:635.94px;font-size:14.6px;color:#3d3d3d;font-weight:400;transform-origin:0 12.36px;">ИнноТрейд</div>
<div class="t" style="left:110.9px;top:659.94px;font-size:14.6px;color:#3d3d3d;font-weight:400;transform-origin:0 12.36px;width:9px;text-align:right;">4</div>
<div class="t" style="left:130.1px;top:659.94px;font-size:14.6px;color:#3d3d3d;font-weight:400;transform-origin:0 12.36px;">Мосимущество</div>
<div class="r" style="left:949px;top:556px;width:938px;height:432px;border:1px solid #a0a0a0;background:#fff;"></div>
<div class="r" style="left:950px;top:557px;width:936px;height:25px;background:#f2f2f2;"></div>
<div class="r" style="left:950px;top:582px;width:936px;height:2px;background:#dadcdc;"></div>
<div class="r" style="left:1487px;top:557px;width:1px;height:25px;background:#d6d6d6;"></div>
<div class="r" style="left:1671px;top:557px;width:1px;height:25px;background:#d6d6d6;"></div>
<div class="r" style="left:950px;top:607px;width:936px;height:1px;background:#e2e2e2;"></div>
<div class="r" style="left:950px;top:631px;width:936px;height:1px;background:#e2e2e2;"></div>
<div class="r" style="left:950px;top:655px;width:936px;height:1px;background:#e2e2e2;"></div>
<div class="r" style="left:950px;top:679px;width:936px;height:1px;background:#e2e2e2;"></div>
<div class="r" style="left:950px;top:585px;width:537px;height:22px;background:linear-gradient(90deg,#f6e2a2,#f3dc98 30%,#f6e19f 60%,#f7e3a2);"></div>
<div class="r" style="left:1488px;top:585px;width:398px;height:22px;background:#fbf1d2;"></div>
<div class="r" style="left:960px;top:588px;width:100px;height:16px;background:radial-gradient(ellipse at 50% 50%,rgba(226,186,90,0.45),rgba(226,186,90,0) 70%);"></div>
<div class="r" style="left:957px;top:589px;width:3px;height:2px;background:rgba(60,60,60,0.45);"></div>
<div class="r" style="left:955.5px;top:638px;width:1.0px;height:9px;background:rgba(60,60,60,0.45);"></div>
<div class="r" style="left:949px;top:658px;width:1px;height:39px;background:#6a6a6a;"></div>
<div class="t" style="left:954.4px;top:561.24px;font-size:14.6px;color:#3d3d3d;font-weight:400;transform-origin:0 12.36px;">Участник</div>
<div class="t" style="left:1493.1px;top:561.24px;font-size:14.6px;color:#3d3d3d;font-weight:400;transform-origin:0 12.36px;">Начало периода</div>
<div class="t" style="left:1676.9px;top:561.24px;font-size:14.6px;color:#3d3d3d;font-weight:400;transform-origin:0 12.36px;">Окончание периода</div>
<div class="t" style="left:1493.1px;top:587.94px;font-size:14.6px;color:#3d3d3d;font-weight:400;transform-origin:0 12.36px;">25.06.2012 00:00</div>
<div class="t" style="left:1676.9px;top:587.94px;font-size:14.6px;color:#3d3d3d;font-weight:400;transform-origin:0 12.36px;">27.06.2012 00:00</div>
<div class="t" style="left:1493.1px;top:611.94px;font-size:14.6px;color:#3d3d3d;font-weight:400;transform-origin:0 12.36px;">25.06.2012 00:00</div>
<div class="t" style="left:1676.9px;top:611.94px;font-size:14.6px;color:#3d3d3d;font-weight:400;transform-origin:0 12.36px;">27.06.2012 00:00</div>
<div class="t" style="left:1493.1px;top:635.94px;font-size:14.6px;color:#3d3d3d;font-weight:400;transform-origin:0 12.36px;">25.06.2012 00:00</div>
<div class="t" style="left:1676.9px;top:635.94px;font-size:14.6px;color:#3d3d3d;font-weight:400;transform-origin:0 12.36px;">27.06.2012 00:00</div>
<div class="t" style="left:1493.1px;top:659.94px;font-size:14.6px;color:#3d3d3d;font-weight:400;transform-origin:0 12.36px;">25.06.2012 00:00</div>
<div class="t" style="left:1676.9px;top:659.94px;font-size:14.6px;color:#3d3d3d;font-weight:400;transform-origin:0 12.36px;">27.06.2012 00:00</div>
<div class="t" style="left:15.7px;top:1020.14px;font-size:14.6px;color:#3d3d3d;font-weight:400;transform-origin:0 12.36px;">Автор:</div>
<div class="inp" style="left:134px;top:1015px;width:266px;height:26px;border-left-color:#dedede;"></div>
<div class="r" style="left:375px;top:1015px;width:1px;height:26px;background:#b8b8b8;"></div>
<svg class="r" style="left:381px;top:1021px" width="14" height="14" viewBox="0 0 14 14"><rect x="4.5" y="1.5" width="8" height="7" fill="none" stroke="#555" stroke-width="1.3"/><path d="M3 4.5H1.5V12.5H9.5V11" fill="none" stroke="#555" stroke-width="1.3"/></svg>
<div class="t" style="left:410.4px;top:1020.14px;font-size:14.6px;color:#3d3d3d;font-weight:400;transform-origin:0 12.36px;">Ответственный:</div>
<div class="inp" style="left:528px;top:1015px;width:266px;height:26px;border-left-color:#dedede;"></div>
<div class="r" style="left:770px;top:1015px;width:1px;height:26px;background:#b8b8b8;"></div>
<svg class="r" style="left:776px;top:1021px" width="14" height="14" viewBox="0 0 14 14"><rect x="4.5" y="1.5" width="8" height="7" fill="none" stroke="#555" stroke-width="1.3"/><path d="M3 4.5H1.5V12.5H9.5V11" fill="none" stroke="#555" stroke-width="1.3"/></svg>
<div class="btn" style="left:806px;top:1015px;width:149px;height:25px;"></div>
<svg class="r" style="left:809px;top:1017px" width="22" height="23" viewBox="0 0 22 23"><circle cx="14.5" cy="5.8" r="4.3" fill="#e0b890"/><path d="M10.3 5Q10.5 0.5 14.5 0.8Q18.5 0.5 18.7 5Q16 2.8 10.3 5Z" fill="#b0503a"/><path d="M8.5 21Q8.5 11.5 14.5 11Q20.5 11.5 20.5 21Z" fill="#6a9fb0"/><path d="M9 21Q9 15 12 13L12.5 21Z" fill="#4f8a55"/><path d="M13 12L14.5 16L16 12Z" fill="#e6eef4"/><path d="M0.8 14.8H5.5V12L11.5 16.8L5.5 21.6V18.8H0.8Z" fill="#f2c230" stroke="#6a5020" stroke-width="0.9"/></svg>
<div class="t" style="left:841.4px;top:1020.14px;font-size:14.6px;color:#3d3d3d;font-weight:400;transform-origin:0 12.36px;">Перенаправ...</div>

</body></html>
